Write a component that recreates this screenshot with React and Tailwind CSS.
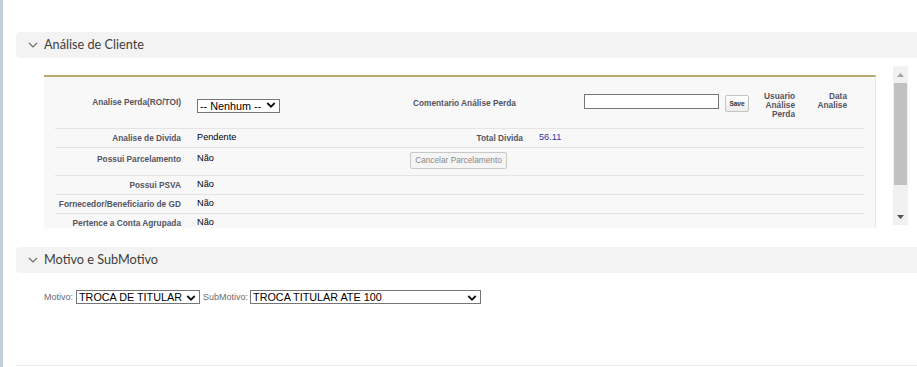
import React from 'react';

const Chevron = () => (
  <svg width="10" height="6" viewBox="0 0 10 6" fill="none" className="shrink-0">
    <path d="M1 1l4 4 4-4" stroke="#6b6b6b" strokeWidth="1.1" />
  </svg>
);

const SelectArrow = () => (
  <svg width="10" height="7" viewBox="0 0 10 7" fill="none" className="pointer-events-none absolute right-[4px] top-1/2 -translate-y-1/2">
    <path d="M1.3 1.5L5 5.2l3.7-3.7" stroke="#111" strokeWidth="1.8" />
  </svg>
);

const Select = ({ value, width }) => (
  <div className="relative inline-block" style={{ width }}>
    <select
      defaultValue={value}
      className="h-[14px] w-full appearance-none rounded-none border border-[#767676] bg-white pl-[2px] pr-[12px] text-[10.8px] leading-[12px] text-black font-['Liberation_Sans',Arial,sans-serif]"
    >
      <option>{value}</option>
    </select>
    <SelectArrow />
  </div>
);

const SectionHeader = ({ title }) => (
  <div className="flex h-[26px] items-center gap-[6px] rounded-l-[4px] bg-[#f3f3f3] pl-[12px]">
    <Chevron />
    <span className="text-[12.7px] text-[#3e3e3c] font-['Lato','Open_Sans',sans-serif]">{title}</span>
  </div>
);

const Label = ({ children }) => (
  <div className="w-[136px] shrink-0 pr-[10px] text-right text-[8.3px] font-bold text-[#545460]">{children}</div>
);

const Value = ({ children, className = '' }) => (
  <div className={`pl-[6px] text-[9.2px] text-black ${className}`}>{children}</div>
);

const rows = [
  ['Possui PSVA', 'Não'],
  ['Fornecedor/Beneficiario de GD', 'Não'],
  ['Pertence a Conta Agrupada', 'Não'],
];

export default function App() {
  return (
    <div className="flex h-[367px] w-[917px] overflow-hidden bg-white font-['Liberation_Sans',Arial,sans-serif]">
      <div className="w-[3px] shrink-0 bg-[#c7cfdb]" />
      <div className="flex flex-1 flex-col pl-[13px] pt-[32px]">
        <SectionHeader title="Análise de Cliente" />

        <div className="mt-[8px] flex h-[162px]">
          <div className="h-full overflow-hidden pl-[28px] pt-[9px]">
            <div className="h-[200px] w-[832px] border-t-2 border-r border-[#b8aa70] border-r-[#e8e8e8] bg-[#f8f8f8] px-[11px] pt-[14px]">
              {/* row 1 */}
              <div className="flex h-[38px] items-start border-b border-[#e4e4e4]">
                <Label><div className="pt-[5px]">Analise Perda(RO/TOI)</div></Label>
                <div className="w-[219px] pl-[6px] pt-[2px]">
                  <Select value="-- Nenhum --" width={83} />
                </div>
                <div className="w-[174px] pl-[3px] pt-[6px] text-[8.3px] font-bold text-[#545460]">Comentario Análise Perda</div>
                <input className="mt-[3px] h-[15px] w-[135px] border border-[#767676] bg-white" />
                <button className="ml-[6px] mt-[4px] h-[17px] w-[24px] rounded-[2px] border border-[#c4c4c4] bg-gradient-to-b from-white to-[#ececec] text-[6.5px] font-bold text-[#333]">
                  Save
                </button>
                <div className="ml-[14px] w-[32px] shrink-0 pt-[1px] text-right text-[8.3px] font-bold leading-[9px] text-[#545460]">
                  Usuario Análise Perda
                </div>
                <div className="ml-[16px] w-[36px] shrink-0 pt-[1px] text-right text-[8.3px] font-bold leading-[9px] text-[#545460]">
                  <div>Data</div>
                  <div>Analise</div>
                </div>
              </div>

              {/* row 2 */}
              <div className="flex h-[19px] items-center border-b border-[#e4e4e4]">
                <Label>Analise de Divida</Label>
                <Value className="w-[206px]">Pendente</Value>
                <div className="w-[132px] pr-[6px] text-right text-[8.3px] font-bold text-[#545460]">Total Divida</div>
                <div className="pl-[10px] text-[9.2px] text-[#3333a8]">56.11</div>
              </div>

              {/* row 3 */}
              <div className="flex h-[28px] items-start border-b border-[#e4e4e4]">
                <Label><div className="pt-[5px]">Possui Parcelamento</div></Label>
                <Value className="w-[219px] pt-[4px]">Não</Value>
                <button className="mt-[4px] h-[17px] w-[97px] rounded-[2px] border border-[#c9c9c9] bg-[#f5f5f5] text-[8.3px] text-[#8a8a8a]">
                  Cancelar Parcelamento
                </button>
              </div>

              {rows.map(([label, value]) => (
                <div key={label} className="flex h-[19px] items-center border-b border-[#e4e4e4]">
                  <Label>{label}</Label>
                  <Value>{value}</Value>
                </div>
              ))}
            </div>
          </div>

          {/* scrollbar */}
          <div className="ml-[17px] flex h-[159px] w-[15px] flex-col items-center bg-[#f1f1f1]">
            <svg width="7" height="4" viewBox="0 0 7 4" className="mt-[7px]">
              <path d="M0 4L3.5 0 7 4z" fill="#a3a3a3" />
            </svg>
            <div className="mt-[6px] h-[102px] w-[13px] bg-[#c1c1c1]" />
            <div className="flex-1" />
            <svg width="7" height="4" viewBox="0 0 7 4" className="mb-[6px]">
              <path d="M0 0L3.5 4 7 0z" fill="#505050" />
            </svg>
          </div>
        </div>

        <div className="mt-[19px]">
          <SectionHeader title="Motivo e SubMotivo" />
        </div>

        <div className="mt-[17px] flex items-center pl-[28px] text-[9px] text-[#6b6b6b]">
          <span className="mr-[3px]">Motivo:</span>
          <Select value="TROCA DE TITULAR" width={124} />
          <span className="ml-[3px] mr-[2px]">SubMotivo:</span>
          <Select value="TROCA TITULAR ATE 100" width={231} />
        </div>

        <div className="flex-1" />
        <div className="mb-[1px] h-px bg-[#ececec]" />
      </div>
    </div>
  );
}
